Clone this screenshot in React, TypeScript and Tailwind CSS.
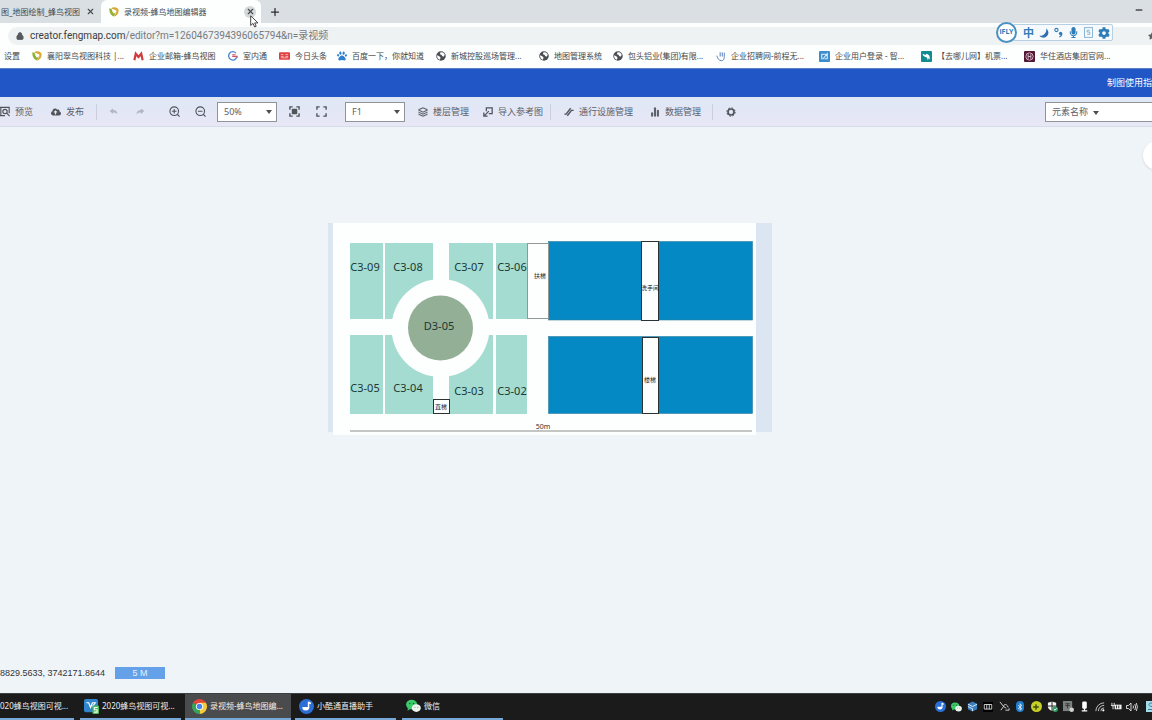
import type { ReactNode } from "react";
import { ChartNoAxesColumn, Layers, Lock, Minus, Plus, X } from "lucide-react";
import { FaBluetoothB, FaCloudUploadAlt, FaCog, FaMicrophone, FaPaw, FaStar } from "react-icons/fa";

/* ---------- Small logos ---------- */

const FengmapLogo = () => (
    <svg viewBox="0 0 12 12" className="w-[10px] h-[10px] shrink-0">
        <path d="M0.5 1.5 C3.5 2 4.5 4 5.5 6.5 L8 6.5 L6 11.5 C2 10 0 6 0.5 1.5Z" fill="#93b032" />
        <path d="M2.5 2 C5 -1 11 0 11.5 4 C11.8 8 9 11 6 11.5 C6.5 9.5 9 8 8.8 5 C8 3 5 2.5 2.5 2Z" fill="#d9a832" />
        <path d="M4 4 L6 7 L8.5 4" fill="none" stroke="#fff" strokeWidth="1.3" />
    </svg>
);

const MailLogo = () => (
    <svg viewBox="0 0 12 12" className="w-[11px] h-[11px] shrink-0">
        <path d="M1.5 10 L3 3 L6 6.5 L9 3 L10.5 10" fill="none" stroke="#d23b3b" strokeWidth="2.4" />
    </svg>
);

const GLogo = () => (
    <svg viewBox="0 0 12 12" className="w-[10px] h-[10px] shrink-0">
        <path d="M9.5 2.5 A5 5 0 1 0 10.5 7.5" fill="none" stroke="#4f86cf" strokeWidth="1.6" />
        <path d="M5 4.5 H9 M5 6.5 H11 V8" fill="none" stroke="#d5536c" strokeWidth="1.4" />
    </svg>
);

const NewsLogo = () => (
    <svg viewBox="0 0 12 8" className="w-[11px] h-[8px] shrink-0">
        <rect width="12" height="8" rx="1" fill="#e04040" />
        <path d="M2 2.5 H5 M2 4.5 H5 M7 2.5 H10 M7 4.5 H10 M2 6 H10" stroke="#ffd9d9" strokeWidth="0.8" />
    </svg>
);

const Globe = () => (
    <svg viewBox="0 0 12 12" className="w-[10px] h-[10px] shrink-0">
        <circle cx="6" cy="6" r="5.7" fill="#4a4e52" />
        <path d="M1.3 5 L4 6.2 L5.5 8 L4.6 10.4 C2.5 9.8 1 7.8 1.3 5Z M5.5 1.5 L8.5 1.8 L10.6 4.5 L9 6.8 L7.4 6 L6.6 4.6 L4.6 4Z" fill="#fff" />
    </svg>
);

const HandLogo = () => (
    <svg viewBox="0 0 12 12" className="w-[10px] h-[11px] shrink-0">
        <path d="M1 5 C2 8 3 11 6.5 11 C10 11 10 8 10 1.5 M7.5 1 V6 M5 1 V6" fill="none" stroke="#5880bd" strokeWidth="1.2" />
    </svg>
);

const ZhiLogo = () => (
    <svg viewBox="0 0 12 12" className="w-[11px] h-[11px] shrink-0">
        <rect width="12" height="12" rx="1" fill="#3f8ccb" />
        <path d="M3 9 V3.5 H8 M4 9 L9 3 V8.5 H6" fill="none" stroke="#d8efff" strokeWidth="1.2" />
    </svg>
);

const CamelLogo = () => (
    <svg viewBox="0 0 12 12" className="w-[11px] h-[11px] shrink-0">
        <rect width="12" height="12" rx="1" fill="#138a8f" />
        <path d="M2 3 L4.5 4.3 L6.5 3 L9 5 L10 9.5 L8.5 7.5 L7.5 10 L6.5 7 L4.5 6.5 L2 4.6Z" fill="#fff" />
    </svg>
);

const HotelLogo = () => (
    <svg viewBox="0 0 12 12" className="w-[11px] h-[11px] shrink-0">
        <rect width="12" height="12" rx="1" fill="#521735" />
        <circle cx="6" cy="6" r="4" fill="none" stroke="#e4c6d3" strokeWidth="0.9" />
        <path d="M4.5 3.5 V8.5 M7.5 3.5 V8.5 M4.5 6 H7.5" stroke="#e4c6d3" strokeWidth="1" />
    </svg>
);

const NoteLogo = ({ className }: { className: string }) => (
    <svg viewBox="0 0 16 16" className={className}>
        <circle cx="8" cy="8" r="8" fill="#2b6fd6" />
        <path d="M3.5 8.5 H11 A3.7 3.7 0 0 1 3.5 8.5Z" fill="#fff" />
        <path d="M10.2 9 V3 C10.8 4.2 11.8 4.6 12.8 4.8" fill="none" stroke="#fff" strokeWidth="1.6" />
    </svg>
);

const WechatLogo = ({ className }: { className: string }) => (
    <svg viewBox="0 0 16 14" className={className}>
        <ellipse cx="6" cy="5.5" rx="6" ry="5.2" fill="#3ccb6b" />
        <path d="M2 9 L1.6 12 L5 10Z" fill="#3ccb6b" />
        <ellipse cx="11" cy="9.2" rx="4.8" ry="4.2" fill="#eef5ef" />
        <circle cx="4" cy="4.2" r="0.8" fill="#15592d" />
        <circle cx="8" cy="4.2" r="0.8" fill="#15592d" />
        <circle cx="9.5" cy="8.4" r="0.6" fill="#7d8a80" />
        <circle cx="12.6" cy="8.4" r="0.6" fill="#7d8a80" />
    </svg>
);

const ChromeLogo = () => (
    <svg viewBox="0 0 16 16" className="w-[15px] h-[15px] shrink-0">
        <path d="M8 8 L1.1 4 A8 8 0 0 1 14.9 4Z" fill="#e2463a" />
        <path d="M8 8 L14.9 4 A8 8 0 0 1 8 16Z" fill="#f7cb3b" />
        <path d="M8 8 L8 16 A8 8 0 0 1 1.1 4Z" fill="#35a457" />
        <path d="M8 4 H14.9 L11.5 10Z" fill="#f7cb3b" />
        <circle cx="8" cy="8" r="3.8" fill="#fff" />
        <circle cx="8" cy="8" r="2.9" fill="#4585ee" />
    </svg>
);

const VideoEditLogo = () => (
    <svg viewBox="0 0 16 16" className="w-[15px] h-[15px] shrink-0">
        <rect width="15" height="14" rx="2" fill="#2f86cf" />
        <path d="M2.5 4 H5 L7 9 L9 4 H12 L9 8" fill="none" stroke="#fff" strokeWidth="1.3" />
        <rect x="9" y="7" width="7" height="9" rx="1" fill="#4dbb55" />
        <path d="M14.5 9 H11 V11.5 H14 V14 H10.5" fill="none" stroke="#fff" strokeWidth="1.1" />
    </svg>
);

/* ---------- Browser ---------- */

const bookmarks = [
    { label: "襄阳翠鸟视图科技 |...", width: "w-[101px]", icon: <FengmapLogo /> },
    { label: "企业邮箱-蜂鸟视图", width: "w-[95px]", icon: <MailLogo /> },
    { label: "室内通", width: "w-[51px]", icon: <GLogo /> },
    { label: "今日头条", width: "w-[58px]", icon: <NewsLogo /> },
    { label: "百度一下，你就知道", width: "w-[99px]", icon: <FaPaw className="w-[10px] h-[10px] shrink-0 text-[#2f7fd0]" /> },
    { label: "新城控股巡场管理...", width: "w-[103px]", icon: <Globe /> },
    { label: "地图管理系统", width: "w-[74px]", icon: <Globe /> },
    { label: "包头铝业(集团)有限...", width: "w-[103px]", icon: <Globe /> },
    { label: "企业招聘网-前程无...", width: "w-[103px]", icon: <HandLogo /> },
    { label: "企业用户登录 - 智...", width: "w-[102px]", icon: <ZhiLogo /> },
    { label: "【去哪儿网】机票...", width: "w-[103px]", icon: <CamelLogo /> },
    { label: "华住酒店集团官网...", width: "w-[103px]", icon: <HotelLogo /> },
];

const TabStrip = () => (
    <div className="h-[23px] flex items-center bg-[#dadfe3] text-[8px] text-[#45494d]">
        <div className="w-[101px] h-full flex items-center justify-end gap-1 pr-[5px]">
            <span>图_地图绘制_蜂鸟视图</span>
            <button aria-label="关闭标签页" className="w-3 h-3 flex items-center justify-center"><X size={9} strokeWidth={3} /></button>
        </div>
        <div className="w-[160px] h-full flex items-center gap-[5px] pl-2 pr-[5px] bg-[#fdfefe] rounded-t-md">
            <FengmapLogo />
            <span>录视频-蜂鸟地图编辑器</span>
            <button aria-label="关闭标签页" className="ml-auto w-3 h-3 rounded-full bg-[#d5d8da] flex items-center justify-center"><X size={9} strokeWidth={3} /></button>
        </div>
        <button aria-label="新标签页" className="ml-2 text-[#2b2d30]"><Plus size={12} strokeWidth={2.5} /></button>
        <button aria-label="最小化" className="ml-auto mr-2 pb-1 text-black"><Minus size={10} strokeWidth={2.5} /></button>
    </div>
);

const AddressBar = () => (
    <div className="h-[22px] pt-1 pl-2 bg-[#fdfefe]">
        <div className="h-full flex items-center gap-[6px] pl-2 rounded-l-full bg-[#eff2f3]">
            <Lock size={8} strokeWidth={3} className="fill-[#54585c] text-[#54585c]" />
            <p className="text-[10px] leading-none text-[#777b7f] whitespace-nowrap font-[Roboto,'Noto_Sans_CJK_SC',sans-serif]">
                <span className="text-[#3a3d40]">creator.fengmap.com</span>/editor?m=1260467394396065794&amp;n=录视频
            </p>
            <FaStar size={8} className="ml-auto -mr-1 text-[#5c6064]" />
        </div>
    </div>
);

const Bookmarks = () => (
    <nav className="h-[23px] pb-px flex items-center bg-[#fdfefe] text-[8px] text-[#44474a] overflow-hidden">
        <a href="#settings" className="w-8 pl-1 shrink-0">设置</a>
        {bookmarks.map(({ label, width, icon }) => (
            <a key={label} href="#bookmark" className={`${width} shrink-0 flex items-center gap-[5px] whitespace-nowrap`}>
                {icon}
                {label}
            </a>
        ))}
    </nav>
);

// Floating input method bar
const ImeBar = () => (
    <div className="absolute right-[39px] top-[22px] flex items-center text-[#2f7db6]">
        <div className="relative z-10 w-[21px] h-[21px] flex items-center justify-center rounded-full border-2 border-[#4a90c0] bg-white text-[7px] font-bold">iFLY</div>
        <div className="-ml-1 h-[17px] w-[100px] flex items-center justify-between pl-[9px] pr-[2px] border border-[#b7cfe2] bg-[#f7fafc] rounded-xs">
            <span className="text-[11px] leading-none font-bold">中</span>
            <svg viewBox="0 0 12 12" className="w-[10px] h-[10px]">
                <path d="M8.5 0.5 A6 6 0 1 1 0.5 9.2 A7 7 0 0 0 8.5 0.5Z" fill="#2f6fb0" />
            </svg>
            <svg viewBox="0 0 10 12" className="w-[9px] h-[11px]">
                <circle cx="2.7" cy="3.2" r="1.8" fill="none" stroke="#2f7db6" strokeWidth="1.2" />
                <circle cx="7.3" cy="7" r="1.9" fill="#2f7db6" />
                <path d="M8.5 7 C8.8 9 8 10.3 6 11" fill="none" stroke="#2f7db6" strokeWidth="1.4" />
            </svg>
            <FaMicrophone size={11} />
            <svg viewBox="0 0 10 12" className="w-[9px] h-[11px]">
                <rect x="0.6" y="0.6" width="8.8" height="10.8" fill="none" stroke="#7faed0" />
                <path d="M6.5 3.5 H3.5 V5.5 H6.5 V8 H3.5" fill="none" stroke="#7faed0" />
            </svg>
            <FaCog size={12} />
        </div>
    </div>
);

/* ---------- Toolbar icons ---------- */

const PreviewIcon = () => (
    <svg viewBox="0 0 12 12" className="w-[10px] h-[11px] shrink-0" fill="none" stroke="#4f535a" strokeWidth="1.4">
        <path d="M0 1 H11 V5 M0 11 H6 M11 8 V4 M1 1 V11" />
        <circle cx="6" cy="6" r="2.6" />
        <path d="M8 8 L11.5 11.5" />
    </svg>
);

const UndoIcon = ({ className }: { className?: string }) => (
    <svg viewBox="0 0 10 8" className={`w-[9px] h-[7px] ${className ?? ""}`}>
        <path d="M0.5 3.5 L4.5 0.5 V2.3 C8 2.3 9.5 4.5 9.5 7.5 C8.5 5.5 7 5 4.5 5 V6.8Z" fill="#b3b7c4" />
    </svg>
);

const ZoomIcon = ({ plus }: { plus?: boolean }) => (
    <svg viewBox="0 0 12 12" className="w-[11px] h-[11px]" fill="none" stroke="#4f535a" strokeWidth="1.2">
        <circle cx="5.7" cy="5.7" r="4.7" />
        <path d="M9 9 L11.5 11.5 M3.2 5.7 H8.2" />
        {plus && <path d="M5.7 3.2 V8.2" />}
    </svg>
);

const FrameIcon = ({ filled }: { filled?: boolean }) => (
    <svg viewBox="0 0 12 12" className="w-[11px] h-[11px]">
        <path d="M1 4 V1 H4 M8 1 H11 V4 M11 8 V11 H8 M4 11 H1 V8" fill="none" stroke="#4f535a" strokeWidth="1.5" />
        {filled && <rect x="3" y="3" width="6" height="6" rx="1" fill="#4f535a" />}
    </svg>
);

const ImportIcon = () => (
    <svg viewBox="0 0 12 12" className="w-[10px] h-[10px] shrink-0">
        <path d="M4 5 V1 H11 V8 H7 M7 5 L2 10 M1 6.5 V11 H5.5" fill="none" stroke="#4f535a" strokeWidth="1.5" />
    </svg>
);

const EscalatorIcon = () => (
    <svg viewBox="0 0 12 12" className="w-[10px] h-[10px] shrink-0">
        <path d="M0.5 8.5 H2.5 L8 1.5 M4 10.5 L9 4 H11.5" fill="none" stroke="#4f535a" strokeWidth="1.7" />
    </svg>
);

const GearIcon = () => (
    <svg viewBox="0 0 12 12" className="w-[10px] h-[10px]" fill="none" stroke="#4f535a">
        <circle cx="6" cy="6" r="3.6" strokeWidth="2" />
        <circle cx="6" cy="6" r="5" strokeWidth="1.2" strokeDasharray="2 1.93" />
    </svg>
);

/* ---------- Editor ---------- */

interface ToolProps {
    label: string;
    icon: ReactNode;
    className: string;
}

const Tool = ({ label, icon, className }: ToolProps) => (
    <button className={`${className} shrink-0 h-5 flex items-center gap-[5px] whitespace-nowrap`}>
        {icon}
        {label}
    </button>
);

const IconTool = ({ label, icon, className }: ToolProps) => (
    <button aria-label={label} className={`${className} shrink-0 h-5 flex items-center justify-center`}>{icon}</button>
);

const Separator = () => <div className="shrink-0 w-px h-4 bg-[#c9cfdf]" />;

const Caret = () => (
    <svg viewBox="0 0 6 4" className="w-[6px] h-[4px] absolute right-[5px] top-2 pointer-events-none">
        <path d="M0 0 H6 L3 4Z" fill="#4b4f55" />
    </svg>
);

interface PickerProps {
    label: string;
    options: string[];
    className: string;
}

const Picker = ({ label, options, className }: PickerProps) => (
    <div className={`${className} relative shrink-0`}>
        <select aria-label={label} className="w-full h-5 pl-[6px] appearance-none border border-[#8f949c] bg-white text-[9px]">
            {options.map(option => <option key={option}>{option}</option>)}
        </select>
        <Caret />
    </div>
);

const Toolbar = () => (
    <div className="h-[30px] flex items-center bg-linear-to-b from-[#dfe7f5] to-[#e8e7f6] border-b border-[#d7dbea] text-[9px] text-[#5c6068] overflow-hidden">
        <Tool className="w-[51px]" label="预览" icon={<PreviewIcon />} />
        <Tool className="w-[45px]" label="发布" icon={<FaCloudUploadAlt size={10} className="text-[#4f535a]" />} />
        <Separator />
        <IconTool className="w-[33px]" label="撤销" icon={<UndoIcon />} />
        <IconTool className="w-5" label="重做" icon={<UndoIcon className="-scale-x-100" />} />
        <IconTool className="ml-[11px] w-[26px]" label="放大" icon={<ZoomIcon plus />} />
        <IconTool className="w-[26px]" label="缩小" icon={<ZoomIcon />} />
        <Picker className="ml-1 w-[60px]" label="缩放比例" options={["50%", "100%", "200%"]} />
        <IconTool className="ml-1 w-[27px]" label="适应屏幕" icon={<FrameIcon filled />} />
        <IconTool className="w-[26px]" label="全屏" icon={<FrameIcon />} />
        <Picker className="ml-[11px] w-[60px]" label="楼层" options={["F1", "F2"]} />
        <Tool className="ml-[13px] w-[65px]" label="楼层管理" icon={<Layers size={10} strokeWidth={2.5} />} />
        <Tool className="w-[67px]" label="导入参考图" icon={<ImportIcon />} />
        <Separator />
        <Tool className="ml-[13px] w-[86px]" label="通行设施管理" icon={<EscalatorIcon />} />
        <Tool className="w-[62px]" label="数据管理" icon={<ChartNoAxesColumn size={10} strokeWidth={5} />} />
        <Separator />
        <IconTool className="w-[35px]" label="设置" icon={<GearIcon />} />
        <div className="ml-auto w-[107px] h-5 shrink-0 flex border border-r-0 border-[#8f949c] bg-white">
            <div className="relative w-[58px]">
                <select aria-label="搜索类型" className="w-full h-full pl-[6px] appearance-none text-[9px]">
                    <option>元素名称</option>
                </select>
                <Caret />
            </div>
            <input aria-label="搜索" className="min-w-0 flex-1" />
        </div>
    </div>
);

const rooms = [
    { name: "C3-09", x: 22, y: 20, w: 33, h: 76, tx: 37, ty: 48 },
    { name: "C3-08", x: 57, y: 20, w: 48, h: 76, tx: 80, ty: 48 },
    { name: "C3-07", x: 121, y: 20, w: 44, h: 76, tx: 141, ty: 48 },
    { name: "C3-06", x: 168, y: 20, w: 31, h: 76, tx: 184, ty: 48 },
    { name: "C3-05", x: 22, y: 112, w: 33, h: 79, tx: 37, ty: 169 },
    { name: "C3-04", x: 57, y: 112, w: 48, h: 79, tx: 80, ty: 169 },
    { name: "C3-03", x: 121, y: 112, w: 44, h: 79, tx: 141, ty: 172 },
    { name: "C3-02", x: 168, y: 112, w: 31, h: 79, tx: 184, ty: 172 },
];

const FloorPlan = () => (
    <svg width="445" height="212" viewBox="0 0 445 212" className="shrink-0" textAnchor="middle">
        <rect width="444" height="209" fill="#dce6f3" />
        <rect x="5" width="423" height="212" fill="#fdfefe" />

        {rooms.map(room => <rect key={room.name} x={room.x} y={room.y} width={room.w} height={room.h} fill="#a4dcd1" />)}
        <circle cx="112.5" cy="105" r="49" fill="#fdfefe" />
        <circle cx="112.5" cy="105" r="32.5" fill="#93af96" />
        <g fontSize="11" fill="#1c3834">
            {rooms.map(room => <text key={room.name} x={room.tx} y={room.ty}>{room.name}</text>)}
            <text x="111" y="107">D3-05</text>
        </g>

        {/* Blue blocks */}
        <g fill="#0489c4" stroke="#2f7f9c" strokeWidth="0.6">
            <rect x="220.5" y="18.5" width="204" height="78.5" />
            <rect x="220.5" y="113.5" width="204" height="77" />
        </g>

        {/* Facilities */}
        <g fill="#fdfefe" stroke="#2c3133">
            <rect x="199.5" y="20.5" width="21" height="75" stroke="#90989a" />
            <rect x="313.5" y="18.5" width="17" height="79" />
            <rect x="314.5" y="114.5" width="16" height="76" />
            <rect x="105.5" y="176.5" width="16" height="14" />
        </g>
        <g fontSize="6" fill="#222">
            <text x="212" y="55">扶梯</text>
            <text x="322" y="67">洗手间</text>
            <text x="322" y="159">楼梯</text>
            <text x="113" y="186">直梯</text>
        </g>

        <text x="215" y="206" fontSize="7" fill="#333">50m</text>
        <path d="M22 208 H424" stroke="#c4c6c6" strokeWidth="2" />
    </svg>
);

/* ---------- Taskbar ---------- */

const tasks = [
    { label: "2020蜂鸟视图可视...", className: "w-[101px]", icon: <VideoEditLogo /> },
    { label: "录视频-蜂鸟地图编...", className: "w-[106px] pl-[7px] bg-[#4a4b4c]", icon: <ChromeLogo /> },
    { label: "小酷通直播助手", className: "w-[101px]", icon: <NoteLogo className="w-[15px] h-[15px] shrink-0" /> },
    { label: "微信", className: "ml-[2px] w-[101px]", icon: <WechatLogo className="w-[15px] h-[14px] shrink-0" /> },
];

const trayIcons = [
    <NoteLogo className="w-[11px] h-[11px]" />,
    <WechatLogo className="w-[11px] h-[10px]" />,
    <svg viewBox="0 0 12 12" className="w-[11px] h-[11px]">
        <path d="M6 0.5 L11 3 V9 L6 11.5 L1 9 V3Z" fill="#3c7fc0" />
        <path d="M1 3.5 L6 6 L11 3.5 M1 6 L6 8.5 V11" fill="none" stroke="#e2effa" />
    </svg>,
    <svg viewBox="0 0 12 12" className="w-[10px] h-[10px]">
        <rect width="12" height="12" fill="#000" />
        <path d="M1.5 3 H10.5 V8.5 H1.5Z M4.5 3 V8.5 M7.5 3 V8.5" fill="none" stroke="#eee" />
    </svg>,
    <svg viewBox="0 0 12 12" className="w-[11px] h-[11px]">
        <path d="M1 1 L5 6 L2 10 M5 6 C5 3 9 3 10 7 M5 6 L8 8 M7 10 H11 V8" fill="none" stroke="#ddd" />
    </svg>,
    <span className="w-2 h-[11px] rounded-full bg-[#1f7fd0] flex items-center justify-center"><FaBluetoothB size={8} /></span>,
    <span className="w-[11px] h-[11px] rounded-full bg-[#c6cf28] flex items-center justify-center text-[#3d4a10]"><Plus size={8} strokeWidth={4} /></span>,
    <svg viewBox="0 0 12 12" className="w-[11px] h-[11px]">
        <path d="M5.5 0.5 L10 2 V6 C10 8.5 8 10 5.5 11 C3 10 1 8.5 1 6 V2Z" fill="#f4f4f4" />
        <path d="M5.5 0 V11 M1 5.5 H10" stroke="#1b1b1b" />
        <circle cx="9" cy="9" r="3" fill="#2d9c62" />
        <path d="M7.5 9 L8.7 10 L10.5 8" fill="none" stroke="#fff" />
    </svg>,
    <svg viewBox="0 0 12 12" className="w-[11px] h-[11px]">
        <rect width="10" height="11" fill="#7b817e" />
        <path d="M2.5 3 H7.5 M2.5 5 H7.5 M5 3 V8" stroke="#333" />
        <circle cx="9.5" cy="9.5" r="2.5" fill="#cfd2d0" />
    </svg>,
    <svg viewBox="0 0 12 12" className="w-[11px] h-[11px]">
        <rect x="3.5" y="0.5" width="5" height="8" rx="1.5" fill="#fff" />
        <path d="M6 8 V11 M3 10.8 H9" stroke="#fff" strokeWidth="1.4" />
    </svg>,
    <svg viewBox="0 0 12 12" className="w-[10px] h-[10px]">
        <path d="M1 11 A10 10 0 0 1 11 1 M4 11 A7 7 0 0 1 11 4 M7 11 A4 4 0 0 1 11 7" fill="none" stroke="#ddd" />
        <circle cx="10" cy="10" r="1.3" fill="#fff" />
    </svg>,
    <svg viewBox="0 0 12 12" className="w-[11px] h-[11px]">
        <path d="M4 4 H11.5 V9 H4Z" fill="#f2f2f2" />
        <path d="M1 2 V5 M3.5 2 V5 M0 5 H4.5 M2.2 5 V9" stroke="#eee" fill="none" />
        <path d="M6 5 V8 M8.5 5 V8" stroke="#222" />
    </svg>,
    <svg viewBox="0 0 12 12" className="w-[12px] h-[12px]">
        <path d="M0.5 4.5 H2.5 L5 2 V10 L2.5 7.5 H0.5Z M7 4.5 Q8 6 7 7.5 M8.8 3 Q10.4 6 8.8 9 M10.3 2 Q12.5 6 10.3 10" fill="none" stroke="#e6e6e6" strokeWidth="0.9" />
    </svg>,
];

const Taskbar = () => (
    <footer className="h-[27px] flex items-stretch gap-1 bg-[#1b1b1b] border-t border-[#3c3f42] text-[8px] text-[#eeeeee] overflow-hidden whitespace-nowrap">
        <button className="w-[76px] shrink-0 flex">
            <span className="w-[74px] h-full flex items-center border-b-2 border-[#76a9d8]">020蜂鸟视图可视...</span>
        </button>
        {tasks.map(({ label, className, icon }) => (
            <button key={label} className={`${className} shrink-0 flex items-center gap-[3px] pl-1 border-b-2 border-[#76a9d8]`}>
                {icon}
                {label}
            </button>
        ))}
        <div className="ml-auto pb-px flex items-center">
            {trayIcons.map((icon, i) => <span key={i} className="w-4 flex items-center justify-center">{icon}</span>)}
            <svg viewBox="0 0 6 11" className="ml-[6px] w-[6px] h-[11px]">
                <rect width="6" height="11" fill="#a5dcea" />
                <path d="M6 2 C2 2 1.5 5 6 5.5 M2 8.5 H6" fill="none" stroke="#2f7f9c" />
            </svg>
        </div>
    </footer>
);

const App = () => {
    return (
        <div className="relative min-h-screen flex flex-col overflow-hidden font-['Noto_Sans','Noto_Sans_CJK_SC',sans-serif]">
            <TabStrip />
            <AddressBar />
            <Bookmarks />

            <header className="h-[29px] flex items-center justify-end bg-[#2056c5] border-t border-[#5d82c8] text-[9px] text-white">
                <a href="#guide" className="whitespace-nowrap">制图使用指</a>
            </header>
            <Toolbar />

            <main className="relative flex-1 flex flex-col justify-between bg-[#eff4f9] overflow-hidden">
                <div className="pt-24 pl-[328px]">
                    <FloorPlan />
                </div>
                <button aria-label="展开面板" className="absolute -right-5 top-[14px] w-[29px] h-[29px] rounded-full bg-white shadow" />

                <div className="pb-[14px] flex items-center gap-[10px] text-[9px] leading-3 text-[#333] font-['Liberation_Sans',sans-serif]">
                    <span>8829.5633, 3742171.8644</span>
                    <div className="w-[50px] h-3 text-center text-[#e6f1ff] bg-[#64a1e8]">5 M</div>
                </div>
            </main>

            <Taskbar />

            <ImeBar />
            {/* Mouse pointer */}
            <svg viewBox="0 0 9 13" className="absolute left-[250px] top-[15px] w-[9px] h-[13px]">
                <path d="M0.7 0.8 V10.5 L3 8.4 L4.6 12 L6.2 11.3 L4.7 7.9 H8Z" fill="#fff" stroke="#333" strokeWidth="0.9" />
            </svg>
        </div>
    );
};

export default App;
